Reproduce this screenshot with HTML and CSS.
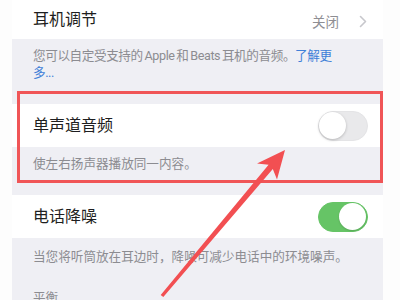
FILE: index.html
```html
<!DOCTYPE html>
<html lang="zh">
<head>
<meta charset="utf-8">
<link rel="stylesheet" href="styles.css">
</head>
<body>
<div class="screen">
  <div class="row row-first">
    <span class="title">耳机调节</span>
    <span class="value">关闭<svg class="chev" width="8" height="13" viewBox="0 0 8 13"><polyline points="1.5,1.5 6.5,6.5 1.5,11.5" fill="none" stroke="#c7c7cc" stroke-width="1.6" stroke-linecap="round" stroke-linejoin="round"/></svg></span>
  </div>
  <p class="footer footer-tight">您可以自定受支持的 Apple 和 Beats 耳机的音频。<span class="link">了解更</span><br><span class="link">多...</span></p>
  <div class="row">
    <span class="title">单声道音频</span>
    <span class="switch"><span class="knob"></span></span>
  </div>
  <p class="footer">使左右扬声器播放同一内容。</p>
  <div class="row">
    <span class="title">电话降噪</span>
    <span class="switch on"><span class="knob"></span></span>
  </div>
  <p class="footer footer-last">当您将听筒放在耳边时，降噪可减少电话中的环境噪声。</p>
  <p class="header">平衡</p>
</div>
<div class="highlight"></div>
<svg class="arrow" width="400" height="300" viewBox="0 0 400 300">
  <polygon points="285,150 277,179.5 272.8,168.9 163.3,297 160.7,295 268.6,164.8 257,163.6" fill="#f24f52"/>
</svg>
</body>
</html>
```
FILE: styles.css
```css
html, body {
  margin: 0;
  padding: 0;
}
body {
  width: 400px;
  height: 300px;
  overflow: hidden;
  background: #fdfdfd;
  position: relative;
  font-family: "Roboto", "Noto Sans CJK SC", sans-serif;
}
.screen {
  margin-left: 12px;
  width: 371px;
  height: 300px;
  background: #efeff4;
  overflow: hidden;
}
.row {
  display: flex;
  align-items: center;
  justify-content: space-between;
  height: 43px;
  padding: 0 15px 0 21px;
  background: #fff;
  box-sizing: border-box;
}
.row-first {
  height: 39px;
  padding-right: 16px;
}
.title {
  font-size: 16px;
  color: #1e1e20;
  line-height: 20px;
}
.value {
  display: flex;
  align-items: center;
  font-size: 13.5px;
  color: #8e8e93;
  padding-top: 3px;
}
.chev {
  margin-left: 20px;
}
.footer {
  margin: 0;
  padding: 8px 21px 23px;
  font-size: 12.6px;
  line-height: 17px;
  color: #8c8c91;
}
.footer-tight {
  white-space: nowrap;
  letter-spacing: -0.4px;
  word-spacing: -1px;
}
.footer-last {
  padding-top: 10px;
  padding-bottom: 21px;
}
.link {
  color: #3f80d8;
}
.header {
  margin: 0;
  padding: 3px 21px 0;
  font-size: 12.6px;
  line-height: 17px;
  color: #8c8c91;
}
.switch {
  position: relative;
  width: 50px;
  height: 30px;
  border-radius: 15px;
  background: #e9e9eb;
  box-sizing: border-box;
  border: 1.5px solid #e4e4e6;
}
.switch .knob {
  position: absolute;
  top: 0;
  left: 0;
  width: 27px;
  height: 27px;
  border-radius: 50%;
  background: #fff;
  box-shadow: 0 1px 3px rgba(0, 0, 0, 0.22);
}
.switch.on {
  background: #66c466;
  border-color: #66c466;
}
.switch.on .knob {
  left: 20px;
  box-shadow: 0 1px 2px rgba(0, 0, 0, 0.15);
}
.highlight {
  position: absolute;
  left: 17px;
  top: 91px;
  width: 366px;
  height: 92px;
  box-sizing: border-box;
  border: 3px solid #f05557;
}
.arrow {
  position: absolute;
  left: 0;
  top: 0;
}
```
